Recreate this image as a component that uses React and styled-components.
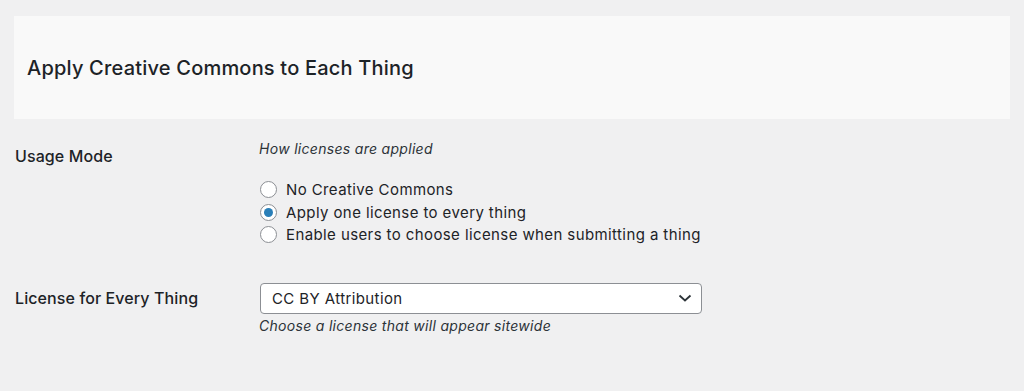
import React from "react";
import styled, { createGlobalStyle } from "styled-components";

const Global = createGlobalStyle`
  html, body { margin: 0; padding: 0; background: #f0f0f1; }
  body { font-family: Inter, "Liberation Sans", Arial, sans-serif; color: #1d2327; }
`;

const Page = styled.div`
  padding: 16px 14px 0 14px;
`;

const Card = styled.div`
  background: #f9f9f9;
  height: 103px;
  display: flex;
  align-items: center;
  padding-left: 13px;
  padding-top: 1px;
  box-sizing: border-box;
`;

const Title = styled.h2`
  margin: 0;
  font-size: 20px;
  font-weight: 500;
  letter-spacing: 0.2px;
  color: #1d2327;
`;

const Table = styled.div`
  display: flex;
  flex-direction: column;
`;

const Row = styled.div`
  display: grid;
  grid-template-columns: 245px 1fr;
  padding-top: ${(p) => p.$top}px;
`;

const Label = styled.div`
  font-size: 16px;
  font-weight: 500;
  letter-spacing: 0.1px;
  padding-left: 1px;
  padding-top: ${(p) => p.$top}px;
`;

const Field = styled.div`
  display: flex;
  flex-direction: column;
`;

const Desc = styled.div`
  font-size: 14px;
  font-style: italic;
  letter-spacing: 0.3px;
  color: #2c3338;
  margin: ${(p) => p.$m};
`;

const RadioList = styled.div`
  display: flex;
  flex-direction: column;
  gap: 3px;
`;

const RadioRow = styled.label`
  display: flex;
  align-items: center;
  gap: 9px;
  font-size: 15px;
  letter-spacing: 0.4px;
  height: 19.5px;
`;

const Radio = styled.span`
  width: 17px;
  height: 17px;
  border-radius: 50%;
  border: 1px solid #8c8f94;
  background: #fff;
  box-sizing: border-box;
  display: flex;
  align-items: center;
  justify-content: center;
  flex: none;
  margin-left: 1px;
  &::after {
    content: "";
    width: 9px;
    height: 9px;
    border-radius: 50%;
    background: #2a7fb8;
    display: ${(p) => (p.$checked ? "block" : "none")};
  }
`;

const Select = styled.div`
  width: 442px;
  height: 31px;
  box-sizing: border-box;
  border: 1px solid #8c8f94;
  border-radius: 4px;
  background: #fff;
  display: flex;
  align-items: center;
  justify-content: space-between;
  padding: 0 9px 0 11px;
  font-size: 15px;
  letter-spacing: 0.4px;
  margin-left: 1px;
`;

const Chevron = () => (
  <svg width="14" height="10" viewBox="0 0 14 10" fill="none">
    <path d="M1.5 2.5 L7 7.5 L12.5 2.5" stroke="#2c3338" strokeWidth="1.8" />
  </svg>
);

export default function App() {
  return (
    <>
      <Global />
      <Page>
        <Card>
          <Title>Apply Creative Commons to Each Thing</Title>
        </Card>
        <Table>
          <Row $top={21}>
            <Label $top={6}>Usage Mode</Label>
            <Field>
              <Desc $m="0 0 23px 0">How licenses are applied</Desc>
              <RadioList>
                <RadioRow><Radio />No Creative Commons</RadioRow>
                <RadioRow><Radio $checked />Apply one license to every thing</RadioRow>
                <RadioRow><Radio />Enable users to choose license when submitting a thing</RadioRow>
              </RadioList>
            </Field>
          </Row>
          <Row $top={38}>
            <Label $top={5}>License for Every Thing</Label>
            <Field>
              <Select>
                <span>CC BY Attribution</span>
                <Chevron />
              </Select>
              <Desc $m="3px 0 0 0">Choose a license that will appear sitewide</Desc>
            </Field>
          </Row>
        </Table>
      </Page>
    </>
  );
}
